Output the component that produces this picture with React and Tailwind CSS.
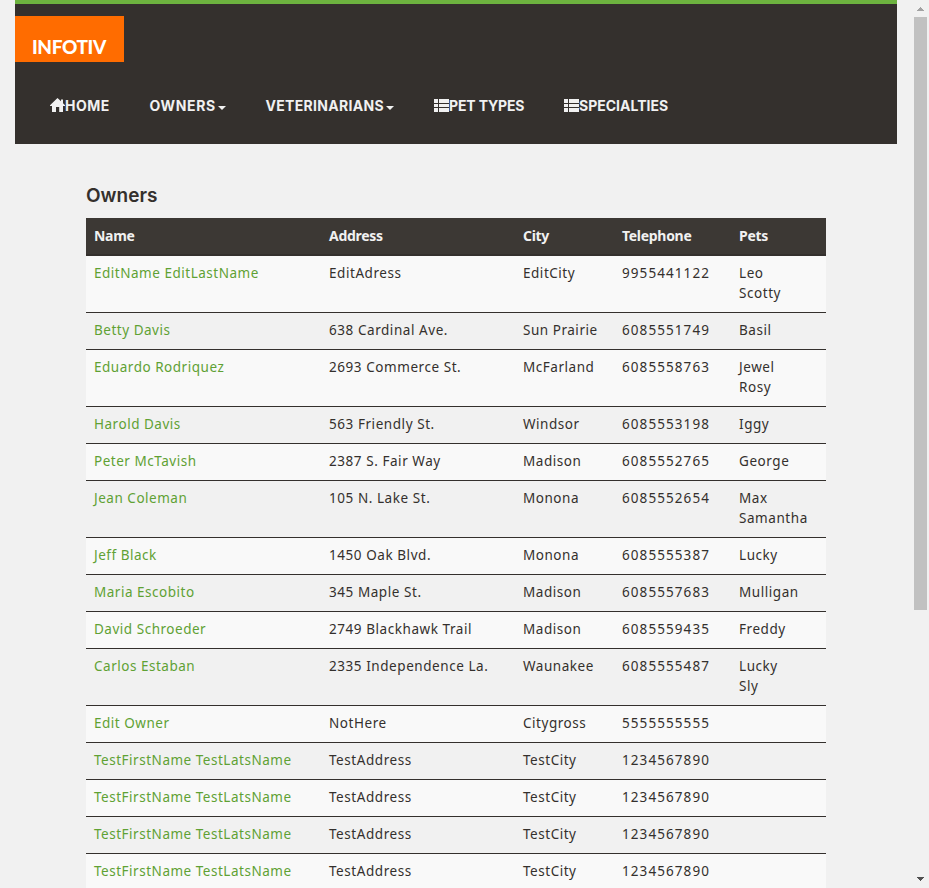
const owners = [
  ['EditName EditLastName', 'EditAdress', 'EditCity', '9955441122', ['Leo', 'Scotty']],
  ['Betty Davis', '638 Cardinal Ave.', 'Sun Prairie', '6085551749', ['Basil']],
  ['Eduardo Rodriquez', '2693 Commerce St.', 'McFarland', '6085558763', ['Jewel', 'Rosy']],
  ['Harold Davis', '563 Friendly St.', 'Windsor', '6085553198', ['Iggy']],
  ['Peter McTavish', '2387 S. Fair Way', 'Madison', '6085552765', ['George']],
  ['Jean Coleman', '105 N. Lake St.', 'Monona', '6085552654', ['Max', 'Samantha']],
  ['Jeff Black', '1450 Oak Blvd.', 'Monona', '6085555387', ['Lucky']],
  ['Maria Escobito', '345 Maple St.', 'Madison', '6085557683', ['Mulligan']],
  ['David Schroeder', '2749 Blackhawk Trail', 'Madison', '6085559435', ['Freddy']],
  ['Carlos Estaban', '2335 Independence La.', 'Waunakee', '6085555487', ['Lucky', 'Sly']],
  ['Edit Owner', 'NotHere', 'Citygross', '5555555555', []],
  ['TestFirstName TestLatsName', 'TestAddress', 'TestCity', '1234567890', []],
  ['TestFirstName TestLatsName', 'TestAddress', 'TestCity', '1234567890', []],
  ['TestFirstName TestLatsName', 'TestAddress', 'TestCity', '1234567890', []],
  ['TestFirstName TestLatsName', 'TestAddress', 'TestCity', '1234567890', []],
];

const HomeIcon = () => (
  <svg className="-mt-0.5 h-[14px] w-[15px] shrink-0" viewBox="0 0 15 14" fill="currentColor">
    <path d="M7.5 0 11 3.3V1.5h2v3.7L15 7.2v.8h-2v6H9.2V9H6v5H2V8H0v-.8Z" />
  </svg>
);

const ListIcon = () => (
  <svg className="-mt-px h-[13px] w-[15px] shrink-0" viewBox="0 0 15 13" fill="currentColor">
    <path d="M0 0h4v4H0zM5 0h10v4H5zM0 5h4v3H0zM5 5h10v3H5zM0 9h4v4H0zM5 9h10v4H5z" />
  </svg>
);

const Caret = () => (
  <svg className="ml-[2px] mt-[3px] h-1 w-2 shrink-0" viewBox="0 0 8 4" fill="currentColor">
    <path d="M0 0h8L4 4z" />
  </svg>
);

export default function App() {
  return (
    <div className="flex h-[888px] w-full overflow-hidden bg-[#f1f1f1] font-['Noto_Sans',sans-serif] text-sm leading-5 text-[#34302d]">
      <div className="w-[912px] shrink-0 px-[15px]">
        <header className="h-36 border-t-4 border-[#6db33f] bg-[#34302d] pt-3">
          <div className="h-[46px] w-[109px] bg-[#ff6c00] pl-[17px] pt-[18px]">
            <span className="block whitespace-nowrap font-['Lato',sans-serif] text-[19px] font-black leading-[26px] tracking-[-0.4px] text-white">INFOTIV</span>
          </div>
          <nav className="mt-[34px] flex h-5 items-center whitespace-nowrap pl-[35px] font-['Inter',sans-serif] text-sm font-bold text-[#f1f1f1]">
            <div className="flex w-[99.5px] items-center"><HomeIcon /><span className="tracking-[0.5px]">HOME</span></div>
            <div className="flex w-[116px] items-center"><span className="tracking-[0.65px]">OWNERS</span><Caret /></div>
            <div className="flex w-[168.5px] items-center"><span className="tracking-[0.3px]">VETERINARIANS</span><Caret /></div>
            <div className="flex w-[130px] items-center"><ListIcon /><span className="tracking-[-0.15px]">PET TYPES</span></div>
            <div className="flex items-center"><ListIcon /><span className="tracking-[0px]">SPECIALTIES</span></div>
          </nav>
        </header>
        <main className="ml-[71px] w-[740px] pt-10">
          <h2 className="mb-[10px] h-6 font-['Inter',sans-serif] text-[19px] font-semibold leading-6">Owners</h2>
          <table className="w-[740px] table-fixed border-collapse">
            <colgroup>
              <col className="w-[235px]" /><col className="w-[194px]" /><col className="w-[99px]" /><col className="w-[117px]" /><col className="w-[95px]" />
            </colgroup>
            <thead>
              <tr className="h-[37px] bg-[#3c3834] text-left align-top font-bold text-[#f1f1f1]">
                {['Name', 'Address', 'City', 'Telephone', 'Pets'].map((h) => (
                  <th key={h} className="border-b-2 border-[#34302d] px-2 pb-[7px] pt-2 tracking-[-0.3px]">{h}</th>
                ))}
              </tr>
            </thead>
            <tbody>
              {owners.map(([name, address, city, phone, pets], i) => (
                <tr key={i} className="whitespace-nowrap border-t border-[#34302d] align-top text-[13.5px] font-[370] odd:bg-[#f9f9f9]">
                  <td className="px-2 pb-[9px] pt-[7px] tracking-[0.52px] text-[#5fa134]">{name}</td>
                  <td className="px-2 pb-[9px] pt-[7px] tracking-[0.56px]">{address}</td>
                  <td className="px-2 pb-[9px] pt-[7px] tracking-[0.53px]">{city}</td>
                  <td className="px-2 pb-[9px] pt-[7px] tracking-[1.08px]">{phone}</td>
                  <td className="px-2 pb-[9px] pt-[7px] tracking-[0.56px]">{pets.map((p) => <div key={p}>{p}</div>)}</td>
                </tr>
              ))}
            </tbody>
          </table>
        </main>
      </div>
      <aside className="ml-[2px] flex h-full w-[13px] flex-col items-center">
        <svg className="mt-[7px] h-1 w-[7px] shrink-0 text-[#a3a3a3]" viewBox="0 0 7 4" fill="currentColor"><path d="M3 0h1v1h1v1h1v1h1v1H0V3h1V2h1V1h1z" /></svg>
        <div className="mt-[6px] h-[593px] w-[13px] shrink-0 bg-[#c1c1c1]" />
        <svg className="mb-[7px] mt-auto h-1 w-[7px] shrink-0 text-[#505050]" viewBox="0 0 7 4" fill="currentColor"><path d="M0 0h7v1H6v1H5v1H4v1H3V3H2V2H1V1H0z" /></svg>
      </aside>
    </div>
  );
}
